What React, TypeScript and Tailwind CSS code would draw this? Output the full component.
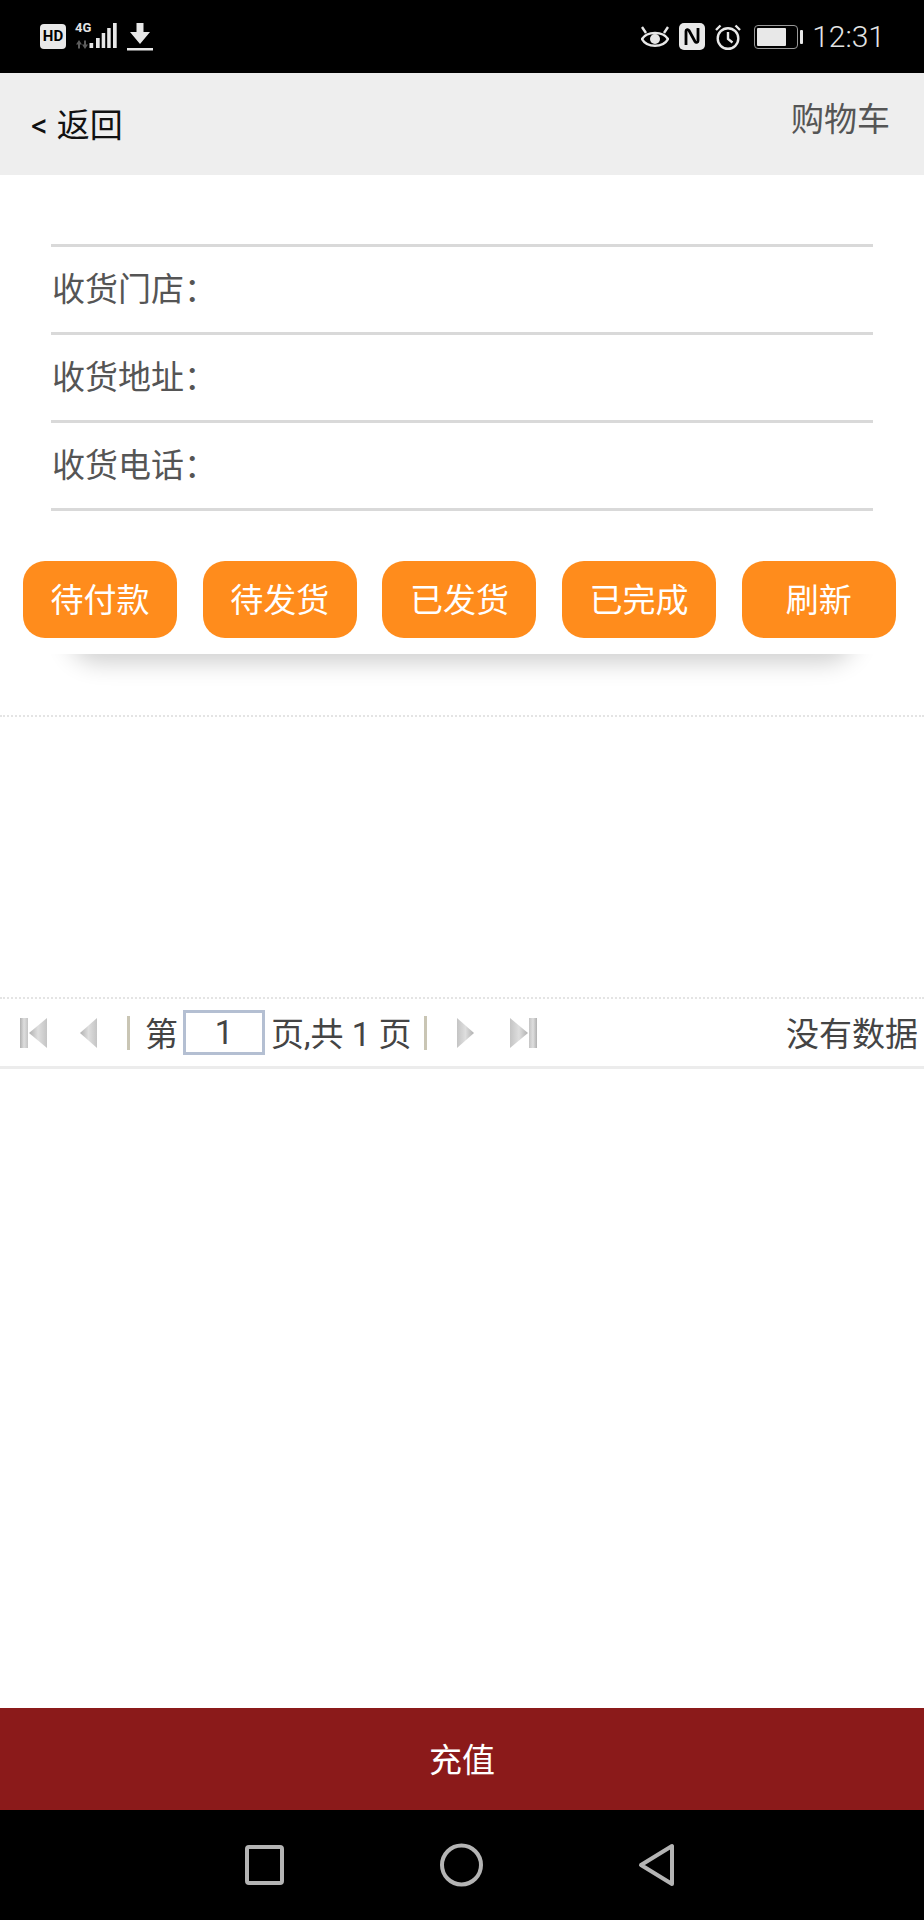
import React from 'react';

const cjk = 'font-["Roboto","Noto_Sans_CJK_SC",sans-serif]';

const addressRows = ['收货门店：', '收货地址：', '收货电话：'];
const tabs = ['待付款', '待发货', '已发货', '已完成', '刷新'];

function StatusBar() {
  return (
    <div className="h-[73px] bg-black flex items-center justify-between pl-[40px] pr-[39px] text-[#e4e4e4]">
      <div className="flex items-center">
        {/* HD badge */}
        <div className="w-[26px] h-[25px] rounded-[4px] bg-[#e8e8e8] text-black text-[15px] leading-[25px] font-bold text-center font-['Roboto',sans-serif]">
          HD
        </div>
        {/* 4G + signal */}
        <div className="relative ml-[9px] w-[42px] h-[27px]">
          <span className="absolute left-0 top-[-3px] text-[13px] leading-[16px] font-bold font-['Roboto',sans-serif]">4G</span>
          <svg width="42" height="27" viewBox="0 0 42 27" className="absolute left-0 top-0">
            <path d="M1 21.500 l3 -4.500 3 4.500h-2v4h-2v-4z M7 21.500 h2v-4h2v4h2 l-3 4.500z" fill="#5c5c5c" />
            <rect x="14.500" y="20" width="3.700" height="5" fill="#e8e8e8" />
            <rect x="21" y="15" width="3.700" height="10" fill="#e8e8e8" />
            <rect x="26.700" y="10" width="3.500" height="15" fill="#e8e8e8" />
            <rect x="32.200" y="5" width="3.500" height="20" fill="#e8e8e8" />
            <rect x="38" y="0" width="3.700" height="25" fill="#e8e8e8" />
          </svg>
        </div>
        {/* download */}
        <svg width="26" height="28" viewBox="0 0 26 28" className="ml-[10px]">
          <path d="M9.500 0h7v9h6.500L13 21 3 9h6.500z" fill="#e8e8e8" />
          <rect x="0" y="25" width="26" height="2.500" fill="#e8e8e8" />
        </svg>
      </div>

      <div className="flex items-center">
        {/* eye comfort */}
        <svg width="28" height="25" viewBox="0 0 28 25" fill="none" stroke="#e8e8e8" strokeWidth="2.400">
          <path d="M1 15 C6 7 22 7 27 15 C22 24 6 24 1 15z" />
          <circle cx="14" cy="15" r="5" fill="#e8e8e8" stroke="none" />
          <path d="M5 9 L1 3 M23 9 L27 3" />
        </svg>
        {/* NFC */}
        <svg width="26" height="27" viewBox="0 0 26 27" className="ml-[10px]">
          <rect width="26" height="27" rx="5" fill="#e8e8e8" />
          <path d="M7 22V8c0-1.500 2-2 3-.5l6 11c1 1.500 3 1 3-.5V5" fill="none" stroke="#000" strokeWidth="2.800" />
        </svg>
        {/* alarm */}
        <svg width="26" height="26" viewBox="0 0 26 26" fill="none" stroke="#e8e8e8" strokeWidth="2.400" className="ml-[10px]">
          <circle cx="13" cy="14.500" r="10.300" />
          <path d="M13 8v7l4.500 3.500" />
          <path d="M1 6 L5.500 1.500 M25 6 L20.500 1.500" />
        </svg>
        {/* battery */}
        <div className="ml-[13px] flex items-center">
          <div className="w-[44px] h-[24px] rounded-[4px] border-[1.5px] border-[#999] p-[2px]">
            <div className="w-[29px] h-full bg-[#e8e8e8] rounded-[1px]" />
          </div>
          <div className="ml-[2px] w-[3px] h-[14px] bg-[#e8e8e8] rounded-[1px]" />
        </div>
        <span className="ml-[9px] text-[30px] leading-[34px] font-['Roboto',sans-serif] font-light">12:31</span>
      </div>
    </div>
  );
}

function FirstIcon({ flip = false }: { flip?: boolean }) {
  return (
    <svg width="27" height="30" viewBox="0 0 27 30" className={flip ? 'rotate-180' : ''}>
      <defs>
        <linearGradient id="pagerGrad" x1="0" x2="1" y1="0" y2="0">
          <stop offset="0" stopColor="#b0b0b0" />
          <stop offset="0.5" stopColor="#dedede" />
          <stop offset="1" stopColor="#c4c4c4" />
        </linearGradient>
      </defs>
      <rect x="0" y="0" width="8" height="30" fill="url(#pagerGrad)" />
      <path d="M27 0v30L9 15z" fill="url(#pagerGrad)" />
    </svg>
  );
}

function PrevIcon({ flip = false }: { flip?: boolean }) {
  return (
    <svg width="17" height="30" viewBox="0 0 17 30" className={flip ? 'rotate-180' : ''}>
      <path d="M17 0v30L0 15z" fill="url(#pagerGrad)" />
    </svg>
  );
}

function PagerSep() {
  return <div className="w-[3px] h-[34px] bg-[#c9c5b4]" />;
}

export default function App() {
  return (
    <div className={`w-[924px] h-[1920px] flex flex-col bg-white ${cjk}`}>
      <StatusBar />

      {/* Header */}
      <div className="h-[102px] bg-[#eeeeee] flex justify-between pl-[31px] pr-[34px]">
        <div className="mt-[28px] h-[50px] flex items-center text-[#111] text-[33px] leading-[50px]">
          <span className="mr-[9px]">&lt;</span>
          返回
        </div>
        <div className="mt-[22px] h-[50px] text-[#555] text-[33px] leading-[50px]">购物车</div>
      </div>

      {/* Address rows */}
      <div className="mt-[69px] mx-[51px] border-t-[3px] border-[#d9d9d9]">
        {addressRows.map(label => (
          <div key={label} className="h-[88px] border-b-[3px] border-[#d9d9d9] flex items-center text-[#555] text-[33px] pl-[1px]">
            {label}
          </div>
        ))}
      </div>

      {/* Status buttons */}
      <div className="mt-[50px] px-[23px] flex gap-[25.700px]">
        {tabs.map(tab => (
          <div
            key={tab}
            className="w-[154px] h-[77px] rounded-[22px] bg-[#ff8c1c] text-white text-[33px] flex items-center justify-center pt-[2px]"
          >
            {tab}
          </div>
        ))}
      </div>

      {/* Curved drop shadow under the buttons */}
      <div className="mt-[16px] mx-[40px] h-[40px] overflow-hidden">
        <div className="mx-[28px] h-[30px] -mt-[30px] rounded-b-[50px] shadow-[0_8px_24px_rgba(0,0,0,0.2)]" />
      </div>

      <div className="mt-[21px] h-[284px] border-y-2 border-dotted border-[#e4e4e4]" />

      {/* Pager */}
      <div className="h-[70px] border-b-[3px] border-[#ececec] flex items-center pl-[20px] pr-[6px] text-[#444] text-[33px]">
        <FirstIcon />
        <div className="ml-[33px]"><PrevIcon /></div>
        <div className="ml-[30px]"><PagerSep /></div>
        <span className="ml-[15px] pt-[4px]">第</span>
        <div className="ml-[5px] w-[82px] h-[45px] border-[3px] border-[#b4bfd2] flex items-center justify-center">1</div>
        <span className="ml-[6px] whitespace-nowrap pt-[4px]">页,共 1 页</span>
        <div className="ml-[13px]"><PagerSep /></div>
        <div className="ml-[30px]"><PrevIcon flip /></div>
        <div className="ml-[36px]"><FirstIcon flip /></div>
        <span className="ml-auto pt-[4px]">没有数据</span>
      </div>

      <div className="flex-1" />

      {/* Recharge bar */}
      <div className="h-[102px] bg-[#8b1a1a] text-white text-[33px] flex items-center justify-center pt-[3px]">充值</div>

      {/* Android nav */}
      <div className="h-[110px] bg-black flex items-center justify-center">
        <svg width="924" height="110" viewBox="0 0 924 110" fill="none" stroke="#b4b4b4" strokeWidth="4" strokeLinejoin="round">
          <rect x="247" y="37" width="35" height="36" rx="2" />
          <circle cx="461.500" cy="55" r="19.500" />
          <path d="M641 55 L672 36 V74 Z" />
        </svg>
      </div>
    </div>
  );
}
